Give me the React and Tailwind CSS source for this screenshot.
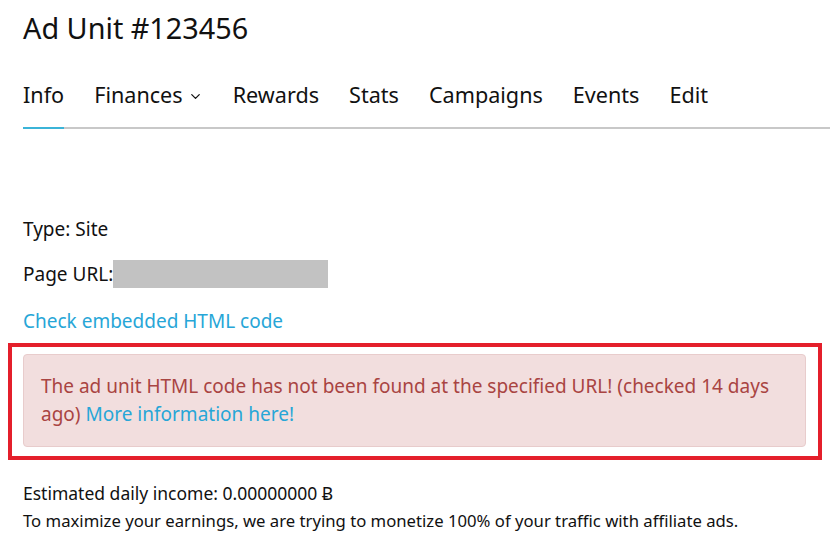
import { ChevronDown } from 'lucide-react';

const tabs = ['Info', 'Finances', 'Rewards', 'Stats', 'Campaigns', 'Events', 'Edit'];

function App() {
  return (
    <div className="min-h-screen bg-white text-[#111] pl-[23px]" style={{ fontFamily: '"Noto Sans", sans-serif' }}>
      <h1 className="pt-[9px] text-[28.8px] leading-[38px]">Ad Unit #123456</h1>

      <ul className="mt-[32px] flex gap-[30px] border-b-2 border-[#c8c8c8]">
        {tabs.map((t) => (
          <li
            key={t}
            className={
              'flex items-center -mb-[2px] pb-[16px] text-[21.6px] leading-[32px] border-b-2 ' +
              (t === 'Info' ? 'border-[#3bb4d8]' : 'border-transparent')
            }
          >
            {t}
            {t === 'Finances' && <ChevronDown size={15} strokeWidth={2} className="ml-[5px] mt-[2px]" />}
          </li>
        ))}
      </ul>

      <div className="mt-[87px] text-[19px] leading-[26px]">Type: Site</div>
      <div className="mt-[18px] flex items-center text-[19px] leading-[26px]">
        Page URL:
        <span className="inline-block w-[215px] h-[28px] bg-[#c2c2c2]" />
      </div>
      <a className="block mt-[20px] text-[19px] leading-[26px] text-[#27a6d7]">Check embedded HTML code</a>

      <div className="-ml-[15px] mt-[9px] w-[814px] border-[4px] border-[#e41f2b] pt-[7px] pb-[9px] pl-[11px] pr-[12px]">
        <div className="rounded-[4px] border border-[#e8cccc] bg-[#f2dede] px-[17px] pt-[17px] pb-[18px] text-[19px] leading-[28px] text-[#a94442]">
          The ad unit HTML code has not been found at the specified URL! (checked 14 days ago){' '}
          <a className="text-[#27a6d7]">More information here!</a>
        </div>
      </div>

      <div className="mt-[20px] text-[17.5px] leading-[26px]">Estimated daily income: 0.00000000 Ƀ</div>
      <div className="mt-[4px] text-[16.7px] leading-[22px]">
        To maximize your earnings, we are trying to monetize 100% of your traffic with affiliate ads.
      </div>
    </div>
  );
}

export default App;
